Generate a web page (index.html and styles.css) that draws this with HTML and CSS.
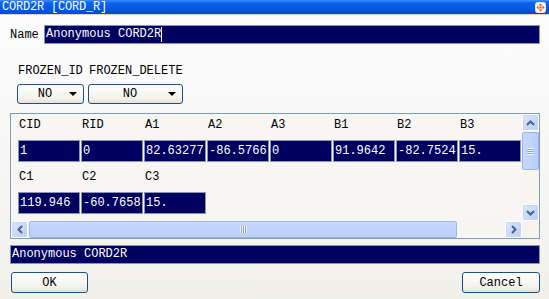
FILE: index.html
```html
<!DOCTYPE html>
<html lang="en">
<head>
    <meta charset="UTF-8">
    <title>CORD2R [CORD_R]</title>
    <link rel="stylesheet" href="styles.css">
</head>
<body>
    <div class="window">
        <div class="titlebar">
            <span class="title">CORD2R [CORD_R]</span>
            <svg class="close-icon" width="11" height="11" viewBox="0 0 11 11">
                <rect x="0.5" y="0.5" width="10" height="10" rx="2" fill="#fff" stroke="#dfe6f5"/>
                <polygon points="5.5,1.5 3.5,3.5 7.5,3.5" fill="#e2451c"/>
                <polygon points="5.5,9.5 3.5,7.5 7.5,7.5" fill="#e2451c"/>
                <polygon points="1.5,5.5 3.5,3.5 3.5,7.5" fill="#e2451c"/>
                <polygon points="9.5,5.5 7.5,3.5 7.5,7.5" fill="#e2451c"/>
                <rect x="4.5" y="4.5" width="2" height="2" fill="#e2451c"/>
            </svg>
        </div>
        <div class="dialog">
            <div class="name-row">
                <label class="name-label">Name</label>
                <div class="text-field name-field">Anonymous CORD2R<span class="caret"></span></div>
            </div>

            <div class="flags">
                <div class="flag">
                    <span class="flag-label">FROZEN_ID</span>
                    <div class="combo combo-id"><span class="combo-text">NO</span><span class="combo-arrow"></span></div>
                </div>
                <div class="flag">
                    <span class="flag-label">FROZEN_DELETE</span>
                    <div class="combo combo-del"><span class="combo-text">NO</span><span class="combo-arrow"></span></div>
                </div>
            </div>

            <div class="panel">
                <div class="panel-content">
                    <div class="block">
                        <span class="cell-label">CID</span><span class="cell">1</span>
                        <span class="cell-label">RID</span><span class="cell">0</span>
                        <span class="cell-label">A1</span><span class="cell">82.63277</span>
                        <span class="cell-label">A2</span><span class="cell">-86.5766</span>
                        <span class="cell-label">A3</span><span class="cell">0</span>
                        <span class="cell-label">B1</span><span class="cell">91.9642</span>
                        <span class="cell-label">B2</span><span class="cell">-82.7524</span>
                        <span class="cell-label">B3</span><span class="cell">15.</span>
                    </div>
                    <div class="block">
                        <span class="cell-label">C1</span><span class="cell">119.946</span>
                        <span class="cell-label">C2</span><span class="cell">-60.7658</span>
                        <span class="cell-label">C3</span><span class="cell">15.</span>
                    </div>
                </div>
                <div class="vscroll">
                    <div class="sb-btn"><svg width="9" height="6" viewBox="0 0 9 6"><polyline points="1,5 4.5,1.5 8,5" fill="none" stroke="#4d6185" stroke-width="2"/></svg></div>
                    <div class="sb-thumb sb-thumb-v"><span class="grip-v"></span></div>
                    <div class="sb-track"></div>
                    <div class="sb-btn"><svg width="9" height="6" viewBox="0 0 9 6"><polyline points="1,1 4.5,4.5 8,1" fill="none" stroke="#4d6185" stroke-width="2"/></svg></div>
                </div>
                <div class="hscroll">
                    <div class="sb-btn"><svg width="6" height="9" viewBox="0 0 6 9"><polyline points="5,1 1.5,4.5 5,8" fill="none" stroke="#4d6185" stroke-width="2"/></svg></div>
                    <div class="sb-thumb sb-thumb-h"><span class="grip-h"></span></div>
                    <div class="sb-track"></div>
                    <div class="sb-btn"><svg width="6" height="9" viewBox="0 0 6 9"><polyline points="1,1 4.5,4.5 1,8" fill="none" stroke="#4d6185" stroke-width="2"/></svg></div>
                </div>
                <div class="corner"></div>
            </div>

            <div class="text-field status-field">Anonymous CORD2R</div>

            <div class="buttons">
                <button class="xp-button">OK</button>
                <button class="xp-button">Cancel</button>
            </div>
        </div>
    </div>
</body>
</html>
```

FILE: styles.css
```css
body {
    margin: 0;
    padding: 0;
    font-family: "Liberation Mono", "DejaVu Sans Mono", monospace;
    font-size: 12px;
    color: #000;
}
.window {
    width: 549px;
    height: 299px;
    display: flex;
    flex-direction: column;
    overflow: hidden;
}
.titlebar {
    height: 14px;
    flex: none;
    display: flex;
    align-items: center;
    justify-content: space-between;
    padding: 0 3px 0 2px;
    background: linear-gradient(#3c8ef8 0, #0d62ec 3px, #0758e6 60%, #0248d2 100%);
    border-bottom: 1px solid #d9d5c2;
    color: #fff;
}
.title {
    line-height: 14px;
    letter-spacing: -0.2px;
}
.close-icon {
    display: block;
    margin-top: 1px;
}
.dialog {
    flex: 1;
    display: flex;
    flex-direction: column;
    padding: 10px 9px 0 10px;
    background: linear-gradient(#fcfcfe 0, #f8f8f7 40%, #f1f0ea 100%);
}

/* name row */
.name-row {
    display: flex;
    align-items: center;
    height: 19px;
}
.name-label {
    width: 34px;
}
.text-field {
    box-sizing: border-box;
    height: 19px;
    line-height: 17px;
    padding-left: 1px;
    background-color: #000060;
    border: 1px solid #8796b4;
    color: #fff;
    white-space: nowrap;
}
.name-field {
    flex: 1;
    display: flex;
    align-items: center;
}
.caret {
    display: inline-block;
    width: 1px;
    height: 15px;
    background-color: #fff;
}

/* frozen flags */
.flags {
    display: flex;
    gap: 4px;
    margin-top: 20px;
    padding-left: 7px;
}
.flag {
    display: flex;
    flex-direction: column;
    gap: 6px;
}
.flag-label {
    line-height: 14px;
    padding-left: 1px;
}
.combo {
    box-sizing: border-box;
    height: 20px;
    display: flex;
    align-items: center;
    border: 1px solid #1d4f7f;
    border-radius: 3px;
    background: linear-gradient(#ffffff, #f4f3ee 70%, #e4e2d8);
}
.combo-id {
    width: 67px;
}
.combo-del {
    width: 95px;
}
.combo-text {
    flex: 1;
    text-align: center;
    padding-left: 3px;
}
.combo-arrow {
    width: 0;
    height: 0;
    margin-right: 6px;
    border-left: 4px solid transparent;
    border-right: 4px solid transparent;
    border-top: 4px solid #000;
}

/* field panel */
.panel {
    box-sizing: border-box;
    height: 126px;
    margin-top: 9px;
    border: 1px solid #7f9db9;
    background-color: #f7f6f2;
    display: grid;
    grid-template-columns: 1fr 17px;
    grid-template-rows: 1fr 17px;
}
.panel-content {
    padding: 4px 0 0 7px;
    display: flex;
    flex-direction: column;
    gap: 8px;
    overflow: hidden;
}
.block {
    display: grid;
    grid-template-columns: repeat(8, 62px);
    grid-template-rows: 14px 22px;
    grid-auto-flow: column;
    column-gap: 1px;
    row-gap: 8px;
}
.cell-label {
    line-height: 14px;
    padding-left: 1px;
}
.cell {
    box-sizing: border-box;
    height: 22px;
    line-height: 20px;
    padding-left: 1px;
    background-color: #000060;
    border: 1px solid #8796b4;
    color: #fff;
    white-space: nowrap;
    overflow: hidden;
}

/* scrollbars */
.vscroll {
    display: flex;
    flex-direction: column;
    background-color: #f6f5f0;
}
.hscroll {
    display: flex;
    background-color: #f6f5f0;
}
.corner {
    background-color: #f4f3ee;
}
.sb-btn {
    box-sizing: border-box;
    width: 17px;
    height: 17px;
    flex: none;
    display: flex;
    align-items: center;
    justify-content: center;
    border: 1px solid #fff;
    border-radius: 2px;
    background: linear-gradient(135deg, #dce7fe, #b9cdf8);
    box-shadow: inset 0 0 0 1px #c6d6fb;
}
.sb-btn svg {
    display: block;
}
.sb-track {
    flex: 1;
}
.sb-thumb {
    box-sizing: border-box;
    flex: none;
    display: flex;
    align-items: center;
    justify-content: center;
    border: 1px solid #9cb6ea;
    border-radius: 2px;
    background: linear-gradient(90deg, #c8d9fd, #b8cdfa);
}
.sb-thumb-v {
    height: 38px;
    margin-top: 1px;
}
.sb-thumb-h {
    width: 428px;
    margin-left: 1px;
    background: linear-gradient(#c8d9fd, #b8cdfa);
}
.grip-v {
    width: 7px;
    height: 7px;
    background: repeating-linear-gradient(#eef3fe 0, #eef3fe 1px, #8fa9e0 1px, #8fa9e0 2px);
}
.grip-h {
    width: 7px;
    height: 7px;
    background: repeating-linear-gradient(90deg, #eef3fe 0, #eef3fe 1px, #8fa9e0 1px, #8fa9e0 2px);
}

/* bottom */
.status-field {
    margin-top: 6px;
}
.buttons {
    display: flex;
    justify-content: space-between;
    margin-top: 8px;
    padding-left: 1px;
}
.xp-button {
    box-sizing: border-box;
    height: 21px;
    padding: 0;
    font-family: "Liberation Mono", "DejaVu Sans Mono", monospace;
    font-size: 12px;
    color: #000;
    border: 1px solid #1d4f7f;
    border-radius: 3px;
    background: linear-gradient(#ffffff, #f4f3ee 70%, #e2e0d6);
}
.xp-button:first-child {
    width: 77px;
}
.xp-button:last-child {
    width: 78px;
}
```
